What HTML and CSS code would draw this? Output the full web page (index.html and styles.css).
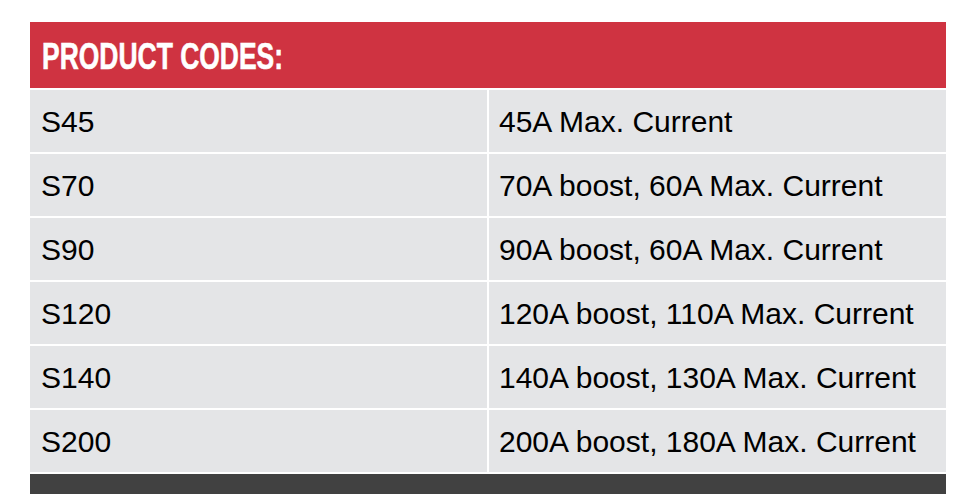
FILE: index.html
```html
<!DOCTYPE html>
<html>
<head>
<meta charset="utf-8">
<link rel="stylesheet" href="styles.css">
</head>
<body>
<div class="codes">
  <div class="codes-head"><span class="codes-title">PRODUCT CODES:</span></div>
  <div class="codes-row"><div class="cell">S45</div><div class="cell cell-desc">45A Max. Current</div></div>
  <div class="codes-row"><div class="cell">S70</div><div class="cell cell-desc">70A boost, 60A Max. Current</div></div>
  <div class="codes-row"><div class="cell">S90</div><div class="cell cell-desc">90A boost, 60A Max. Current</div></div>
  <div class="codes-row"><div class="cell">S120</div><div class="cell cell-desc">120A boost, 110A Max. Current</div></div>
  <div class="codes-row"><div class="cell">S140</div><div class="cell cell-desc">140A boost, 130A Max. Current</div></div>
  <div class="codes-row"><div class="cell">S200</div><div class="cell cell-desc">200A boost, 180A Max. Current</div></div>
  <div class="codes-foot"></div>
</div>
</body>
</html>
```
FILE: styles.css
```css
html, body {
  margin: 0;
  padding: 0;
  background: #ffffff;
}
body {
  font-family: "Liberation Sans", Arial, sans-serif;
  overflow: hidden;
}
.codes {
  width: 916px;
  margin: 22px 0 0 30px;
  display: flex;
  flex-direction: column;
  gap: 2px;
}
.codes-head {
  height: 66px;
  background: #cf3341;
  display: flex;
  align-items: center;
  padding-left: 12px;
}
.codes-title {
  display: inline-block;
  color: #ffffff;
  font-weight: bold;
  font-size: 37px;
  line-height: 1;
  transform: scaleX(0.715);
  transform-origin: left center;
  white-space: nowrap;
  margin-top: 2px;
  -webkit-text-stroke: 0.6px #ffffff;
}
.codes-row {
  display: grid;
  grid-template-columns: 457px 457px;
  column-gap: 2px;
}
.cell {
  height: 62px;
  background: #e4e5e7;
  display: flex;
  align-items: center;
  padding-left: 11px;
  padding-top: 1px;
  box-sizing: border-box;
  font-size: 30px;
  color: #000000;
  white-space: nowrap;
}
.cell-desc {
  padding-left: 10px;
}
.codes-foot {
  height: 40px;
  background: #414141;
}
```
